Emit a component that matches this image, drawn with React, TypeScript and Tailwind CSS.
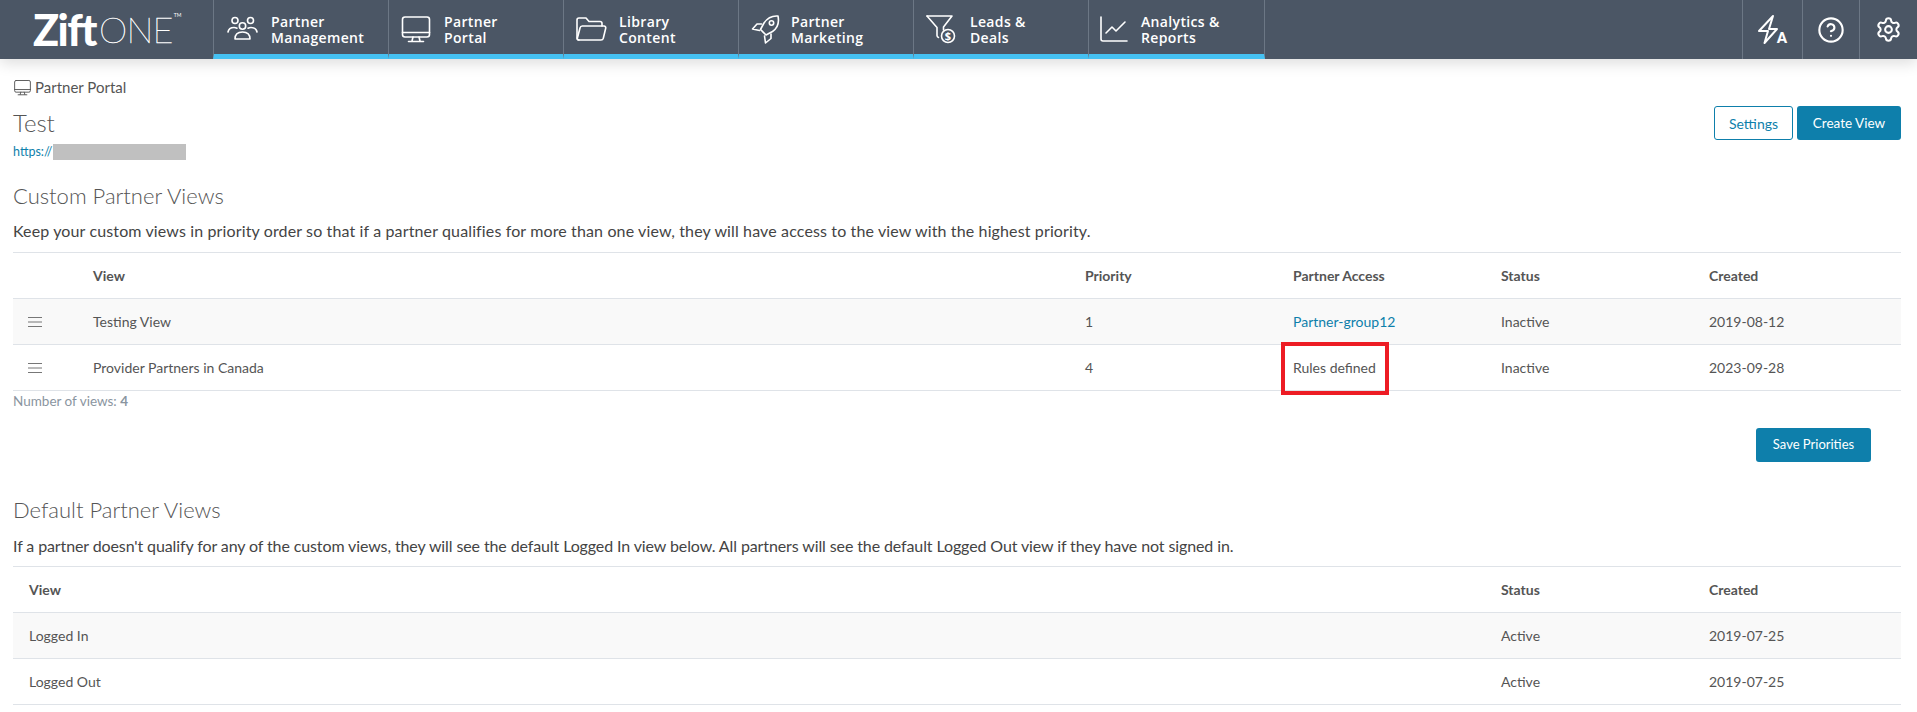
import React from "react";
import { CircleHelp, Settings as Gear } from "lucide-react";

const Ico = ({ w = 36, h = 36, vb = "0 0 36 36", children, className = "" }: any) => (
  <svg width={w} height={h} viewBox={vb} fill="none" stroke="currentColor" strokeWidth={1.6} strokeLinecap="round" strokeLinejoin="round" className={className}>
    {children}
  </svg>
);

const PeopleIcon = () => (
  <Ico>
    <circle cx="11" cy="9.500" r="3" />
    <circle cx="26.500" cy="9.500" r="3" />
    <circle cx="18.500" cy="15" r="3.200" />
    <path d="M4 21c.5-3 3-4.500 6-4.500 1 0 2 .2 3 .7" />
    <path d="M33 21c-.5-3-3-4.500-6-4.500-1 0-2 .2-3 .7" />
    <path d="M11 28c0-4.500 3-7 7.500-7s7.500 2.500 7.500 7z" />
  </Ico>
);
const MonitorIcon = ({ s = 36 }: { s?: number }) => (
  <Ico w={s} h={s}>
    <rect x="4.500" y="6" width="27" height="20" rx="2.500" />
    <path d="M4.500 21.500h27" />
    <path d="M15 26l-1 4M21 26l1 4M10.500 30.500h15" />
  </Ico>
);
const FolderIcon = () => (
  <Ico>
    <path d="M6 29c-1.200 0-2-.8-2-2V9c0-1.200.8-2 2-2h7l3 3.500h11c1.200 0 2 .8 2 2V15" />
    <path d="M6 29c-1.100 0-1.900-.9-1.600-2l2.600-10c.3-1.200 1.100-2 2.300-2H31c1.300 0 2 1 1.700 2.200l-2.400 10c-.3 1.100-1.200 1.800-2.300 1.800z" />
  </Ico>
);
const RocketIcon = () => (
  <Ico>
    <path d="M30 5c-6-.5-11 2.500-14 7l-3.500 6.500 5.500 5.500 6.500-3.500c4.500-3 7-8 5.500-15.500z" />
    <circle cx="23.500" cy="12" r="2.200" />
    <path d="M13.500 13H9l-4.500 5 7 1.500" />
    <path d="M23 23v4.500l-5.500 4.500-1-7" />
  </Ico>
);
const FunnelIcon = () => (
  <Ico>
    <path d="M3 5h25l-8.500 11v3" />
    <path d="M3 5l10 11.500v8c0 .8.500 1.500 1.500 2" />
    <circle cx="24" cy="25" r="6.500" />
    <text x="24" y="29" fontSize="11" fontWeight="700" textAnchor="middle" fill="currentColor" stroke="none" fontFamily="'Open Sans', sans-serif">$</text>
  </Ico>
);
const ChartIcon = () => (
  <Ico>
    <path d="M5 6v22c0 1.200.8 2 2 2h24" />
    <path d="M10 22l6-6 4 4 9-9" />
  </Ico>
);
const BoltAIcon = () => (
  <svg width="36" height="36" viewBox="0 0 36 36" fill="none" stroke="currentColor" strokeWidth={2} strokeLinejoin="round" strokeLinecap="round">
    <path d="M18 4L4 19h9l-3.500 12L22 17h-8z" />
    <text x="27" y="31" fontSize="14" fontWeight="800" textAnchor="middle" fill="currentColor" stroke="none" fontFamily="Lato, sans-serif">A</text>
  </svg>
);

const navItems = [
  { a: "Partner", b: "Management", icon: <PeopleIcon />, pad: "pl-[10px] gap-[11px]" },
  { a: "Partner", b: "Portal", icon: <MonitorIcon />, pad: "pl-[9px] gap-[10px]" },
  { a: "Library", b: "Content", icon: <FolderIcon />, pad: "pl-[9px] gap-[10px]" },
  { a: "Partner", b: "Marketing", icon: <RocketIcon />, pad: "pl-[9px] gap-[7px]" },
  { a: "Leads &", b: "Deals", icon: <FunnelIcon />, pad: "pl-[10px] gap-[10px]" },
  { a: "Analytics &", b: "Reports", icon: <ChartIcon />, pad: "pl-[7px] gap-[9px]" },
];

const rowText = "text-[14px] text-[#555] leading-[20px]";

function CustomRow({ view, pri, access, link, status, created, shaded }: any) {
  return (
    <div className={`grid grid-cols-[80px_992px_208px_208px_208px_1fr] items-center h-[46px] border-b border-[#dfe3e8] ${rowText} ${shaded ? "bg-[#f9f9f9]" : ""}`}>
      <div className="pl-[15px] text-[#777]">
        <svg width="15" height="12" viewBox="0 0 15 12" stroke="currentColor" strokeWidth="1"><path d="M0 1.500h14M0 6h14M0 10.500h14" /></svg>
      </div>
      <div>{view}</div>
      <div>{pri}</div>
      <div className={link ? "text-[#0e7fab]" : ""}>{access}</div>
      <div>{status}</div>
      <div>{created}</div>
    </div>
  );
}

function DefaultRow({ view, status, created, shaded }: any) {
  return (
    <div className={`grid grid-cols-[1472px_208px_1fr] items-center h-[46px] pl-4 border-b border-[#dfe3e8] ${rowText} ${shaded ? "bg-[#f9f9f9]" : ""}`}>
      <div>{view}</div>
      <div>{status}</div>
      <div>{created}</div>
    </div>
  );
}

export default function App() {
  return (
    <div className="w-[1917px] h-[712px] overflow-hidden bg-white font-['Lato',sans-serif] text-[#555]">
      <header className="relative z-10 h-[59px] bg-[#4b5665] flex text-white shadow-[0_4px_14px_rgba(0,0,0,0.14)]">
        <div className="w-[213px] shrink-0 flex items-center pl-[33px] pb-[1px]">
          <span className="font-black text-[43px] leading-none tracking-[-1.5px]">Zift</span>
          <span className="font-thin text-[36px] leading-none ml-[3px] tracking-[-0.8px] [-webkit-text-stroke:0.4px_white]">ONE</span>
          <span className="self-start mt-[13px] ml-[1px] text-[5px] leading-none">TM</span>
        </div>
        <nav className="flex">
          {navItems.map((n, i) => (
            <div key={i} className={`relative w-[175px] flex items-start pt-[12px] border-l border-[#6c7785] border-b-[5px] border-b-[#45c1f2] ${n.pad} last:border-r last:w-[177px]`}>
              <span className="shrink-0 -mt-[1px]">{n.icon}</span>
              <span className="font-['Open_Sans',sans-serif] font-semibold text-[14px] leading-[16px] tracking-[0.35px] mt-[2px]">
                {n.a}
                <br />
                {n.b}
              </span>
            </div>
          ))}
        </nav>
        <div className="ml-auto flex">
          <div className="w-[60px] flex items-center justify-center border-l border-[#6c7785]"><BoltAIcon /></div>
          <div className="w-[57px] flex items-center justify-center border-l border-[#6c7785]"><CircleHelp size={28} strokeWidth={1.8} /></div>
          <div className="w-[58px] flex items-center justify-center border-l border-[#6c7785]"><Gear size={27} strokeWidth={1.8} /></div>
        </div>
      </header>

      <main className="pl-[13px] pr-[16px]">
        <div className="flex items-center gap-[2px] h-[18px] mt-[19px] text-[15px] text-[#555]">
          <span className="-ml-[1px]"><MonitorIcon s={21} /></span>
          <span>Partner Portal</span>
        </div>
        <div className="flex justify-between items-start mt-[12px]">
          <div>
            <h1 className="text-[24px] leading-[30px] font-light text-[#555]">Test</h1>
            <div className="flex items-center h-[16px] mt-[6px] text-[12.500px] text-[#0e7fab]">
              <span className="w-[40px]">https://</span>
              <span className="inline-block w-[133px] h-[16px] bg-[#c0c0c0]"></span>
            </div>
          </div>
          <div className="flex gap-[4px] -mt-[2px]">
            <button className="w-[79px] h-[34px] rounded-[3px] border border-[#0e7fab] bg-white text-[#0e7fab] text-[14px]">Settings</button>
            <button className="w-[104px] h-[34px] rounded-[3px] bg-[#0e7fab] text-white text-[13.500px]">Create View</button>
          </div>
        </div>

        <h2 className="text-[22px] leading-[26px] font-light mt-[23px]">Custom Partner Views</h2>
        <p className="text-[16px] leading-[22px] tracking-[0.13px] mt-[11px] text-[#444]">
          Keep your custom views in priority order so that if a partner qualifies for more than one view, they will have access to the view with the highest priority.
        </p>
        <div className="mt-[10px] border-t border-[#dfe3e8]">
          <div className={`grid grid-cols-[80px_992px_208px_208px_208px_1fr] items-center h-[46px] border-b border-[#dfe3e8] font-bold ${rowText}`}>
            <div></div>
            <div>View</div>
            <div>Priority</div>
            <div>Partner Access</div>
            <div>Status</div>
            <div>Created</div>
          </div>
          <CustomRow view="Testing View" pri="1" access="Partner-group12" link status="Inactive" created="2019-08-12" shaded />
          <div className="relative">
            <CustomRow view="Provider Partners in Canada" pri="4" access="Rules defined" status="Inactive" created="2023-09-28" />
            <div className="absolute left-[1268px] top-[-3px] w-[108px] h-[53px] border-[4px] border-[#ed1c24]"></div>
          </div>
        </div>
        <div className="text-[13.500px] leading-[18px] mt-[1px] text-[#8a95a0]">
          Number of views: <span className="font-bold">4</span>
        </div>
        <div className="flex justify-end pr-[30px] mt-[18px]">
          <button className="w-[115px] h-[34px] rounded-[3px] bg-[#0e7fab] text-white text-[13px]">Save Priorities</button>
        </div>

        <h2 className="text-[22px] leading-[26px] font-light mt-[35px]">Default Partner Views</h2>
        <p className="text-[16px] leading-[22px] tracking-[-0.11px] mt-[12px] text-[#444]">
          If a partner doesn't qualify for any of the custom views, they will see the default Logged In view below. All partners will see the default Logged Out view if they have not signed in.
        </p>
        <div className="mt-[9px] border-t border-[#dfe3e8]">
          <div className={`grid grid-cols-[1472px_208px_1fr] items-center h-[46px] pl-4 border-b border-[#dfe3e8] font-bold ${rowText}`}>
            <div>View</div>
            <div>Status</div>
            <div>Created</div>
          </div>
          <DefaultRow view="Logged In" status="Active" created="2019-07-25" shaded />
          <DefaultRow view="Logged Out" status="Active" created="2019-07-25" />
        </div>
      </main>
    </div>
  );
}
